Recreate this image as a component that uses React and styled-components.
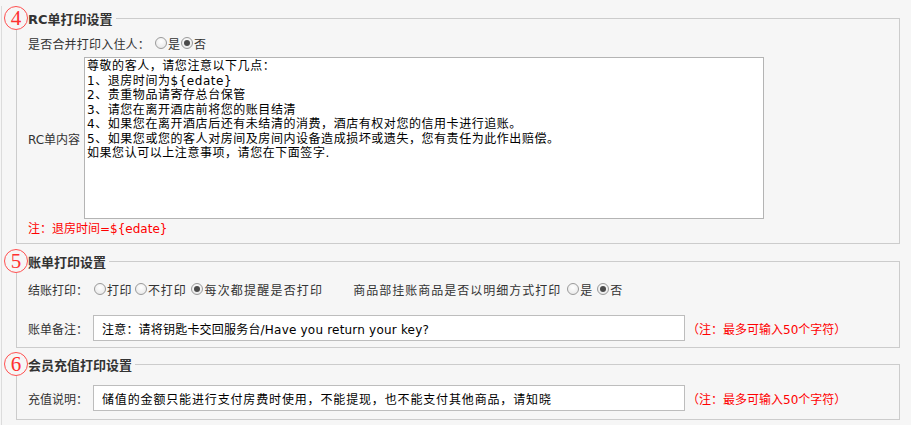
import React from 'react';
import styled, { createGlobalStyle } from 'styled-components';

const GlobalStyle = createGlobalStyle`
  html, body {
    margin: 0;
    padding: 0;
    background: #f6f6f6;
  }
  body {
    font-family: "DejaVu Sans", "Noto Sans CJK SC", sans-serif;
    font-size: 12px;
    color: #333;
  }
`;

const Page = styled.div`
  width: 884px;
  margin-left: 1px;
  border-left: 1px solid #dcdcdc;
  padding: 0 10px 6px 14px;
`;

const Section = styled.fieldset`
  margin: ${(p) => p.$top}px 0 0;
  padding: 0;
  border: 1px solid #cccccc;
  min-width: 0;
`;

const Legend = styled.legend`
  display: flex;
  align-items: center;
  margin-left: -13px;
  padding: 0 3px 0 0;
`;

const Circle = styled.span`
  width: 22px;
  height: 22px;
  border: 1px solid #ff5050;
  border-radius: 50%;
  background: #f6f6f6;
  display: flex;
  align-items: center;
  justify-content: center;
  color: #ff3030;
  font-family: "Liberation Serif", serif;
  font-size: 21px;
  line-height: 1;
`;

const LegendText = styled.span`
  font-size: 13px;
  font-weight: bold;
  color: #333;
`;

const Body = styled.div`
  padding: ${(p) => p.$pad};
`;

const Row = styled.div`
  display: flex;
  align-items: center;
  height: ${(p) => p.$h || 18}px;
  margin-top: ${(p) => p.$top || 0}px;
`;

const Label = styled.span`
  white-space: nowrap;
  width: ${(p) => (p.$w ? `${p.$w}px` : 'auto')};
  letter-spacing: ${(p) => p.$ls || 0}px;
  flex-shrink: 0;
`;

const Radio = styled.input.attrs({ type: 'radio' })`
  appearance: none;
  width: 12px;
  height: 12px;
  margin: 0 1px 0 ${(p) => p.$gap || 3}px;
  border: 1px solid #9a9a9a;
  border-radius: 50%;
  background: radial-gradient(circle at 50% 35%, #ffffff 0%, #e4e4e4 100%);
  box-sizing: border-box;
  flex-shrink: 0;
  position: relative;

  &:checked::after {
    content: '';
    position: absolute;
    left: 2px;
    top: 2px;
    width: 6px;
    height: 6px;
    border-radius: 50%;
    background: #4a4a4a;
  }
`;

const Group = styled.span`
  display: inline-flex;
  align-items: center;
  margin-left: ${(p) => p.$left || 0}px;
`;

const ContentRow = styled.div`
  display: flex;
  align-items: center;
  margin-top: 5px;
`;

const Memo = styled.textarea`
  width: 680px;
  height: 162px;
  box-sizing: border-box;
  margin: 0;
  padding: 1px 2px;
  border: 1px solid #b4b4b4;
  background: #fff;
  color: #000;
  font-family: "DejaVu Sans", "Noto Sans CJK SC", sans-serif;
  font-size: 12px;
  line-height: 14.5px;
  letter-spacing: 0.55px;
  resize: none;
  overflow: hidden;
  outline: none;
`;

const Note = styled.div`
  color: #ff0000;
  height: 16px;
  line-height: 16px;
  margin-top: 2px;
`;

const TextInput = styled.input`
  width: 592px;
  height: 26px;
  box-sizing: border-box;
  margin: 0 0 0 5px;
  padding: 0 8px;
  border: 1px solid #bdbdbd;
  background: #fff;
  color: #000;
  font-family: "DejaVu Sans", "Noto Sans CJK SC", sans-serif;
  font-size: 12px;
  letter-spacing: ${(p) => p.$ls || 0}px;
  outline: none;
`;

const Hint = styled.span`
  color: #ff0000;
  margin-left: 2px;
  white-space: nowrap;
`;

const rcText = `尊敬的客人，请您注意以下几点：
1、退房时间为\${edate}
2、贵重物品请寄存总台保管
3、请您在离开酒店前将您的账目结清
4、如果您在离开酒店后还有未结清的消费，酒店有权对您的信用卡进行追账。
5、如果您或您的客人对房间及房间内设备造成损坏或遗失，您有责任为此作出赔偿。
如果您认可以上注意事项，请您在下面签字.`;

const SectionTitle = ({ num, children }) => (
  <Legend>
    <Circle>{num}</Circle>
    <LegendText>{children}</LegendText>
  </Legend>
);

const App = () => {
  return (
    <>
      <GlobalStyle />
      <Page>
        <Section $top={6}>
          <SectionTitle num="4">RC单打印设置</SectionTitle>
          <Body $pad="4px 11px 6px">
            <Row>
              <Label $ls={0.2}>是否合并打印入住人：</Label>
              <Radio name="merge" $gap={5} />
              <span>是</span>
              <Radio name="merge" defaultChecked $gap={1} />
              <span>否</span>
            </Row>
            <ContentRow>
              <Label $w={56}>RC单内容</Label>
              <Memo defaultValue={rcText} />
            </ContentRow>
            <Note>注：退房时间=${'{edate}'}</Note>
          </Body>
        </Section>

        <Section $top={5}>
          <SectionTitle num="5">账单打印设置</SectionTitle>
          <Body $pad="7px 11px 6px">
            <Row>
              <Label>结账打印：</Label>
              <Radio name="bill" $gap={6} />
              <Label $ls={0.5}>打印</Label>
              <Radio name="bill" $gap={3} />
              <Label $ls={0.8}>不打印</Label>
              <Radio name="bill" defaultChecked $gap={5} />
              <Label $ls={1.2}>每次都提醒是否打印</Label>
              <Group $left={30}>
                <Label $ls={1}>商品部挂账商品是否以明细方式打印</Label>
                <Radio name="detail" $gap={6} />
                <span>是</span>
                <Radio name="detail" defaultChecked $gap={5} />
                <span>否</span>
              </Group>
            </Row>
            <Row $h={26} $top={17}>
              <Label>账单备注：</Label>
              <TextInput $ls={0.2} defaultValue="注意：请将钥匙卡交回服务台/Have you return your key?" />
              <Hint>（注：最多可输入50个字符）</Hint>
            </Row>
          </Body>
        </Section>

        <Section $top={4}>
          <SectionTitle num="6">会员充值打印设置</SectionTitle>
          <Body $pad="9px 11px 8px">
            <Row $h={26}>
              <Label>充值说明：</Label>
              <TextInput $ls={0.85} defaultValue="储值的金额只能进行支付房费时使用，不能提现，也不能支付其他商品，请知晓" />
              <Hint>（注：最多可输入50个字符）</Hint>
            </Row>
          </Body>
        </Section>
      </Page>
    </>
  );
};

export default App;
